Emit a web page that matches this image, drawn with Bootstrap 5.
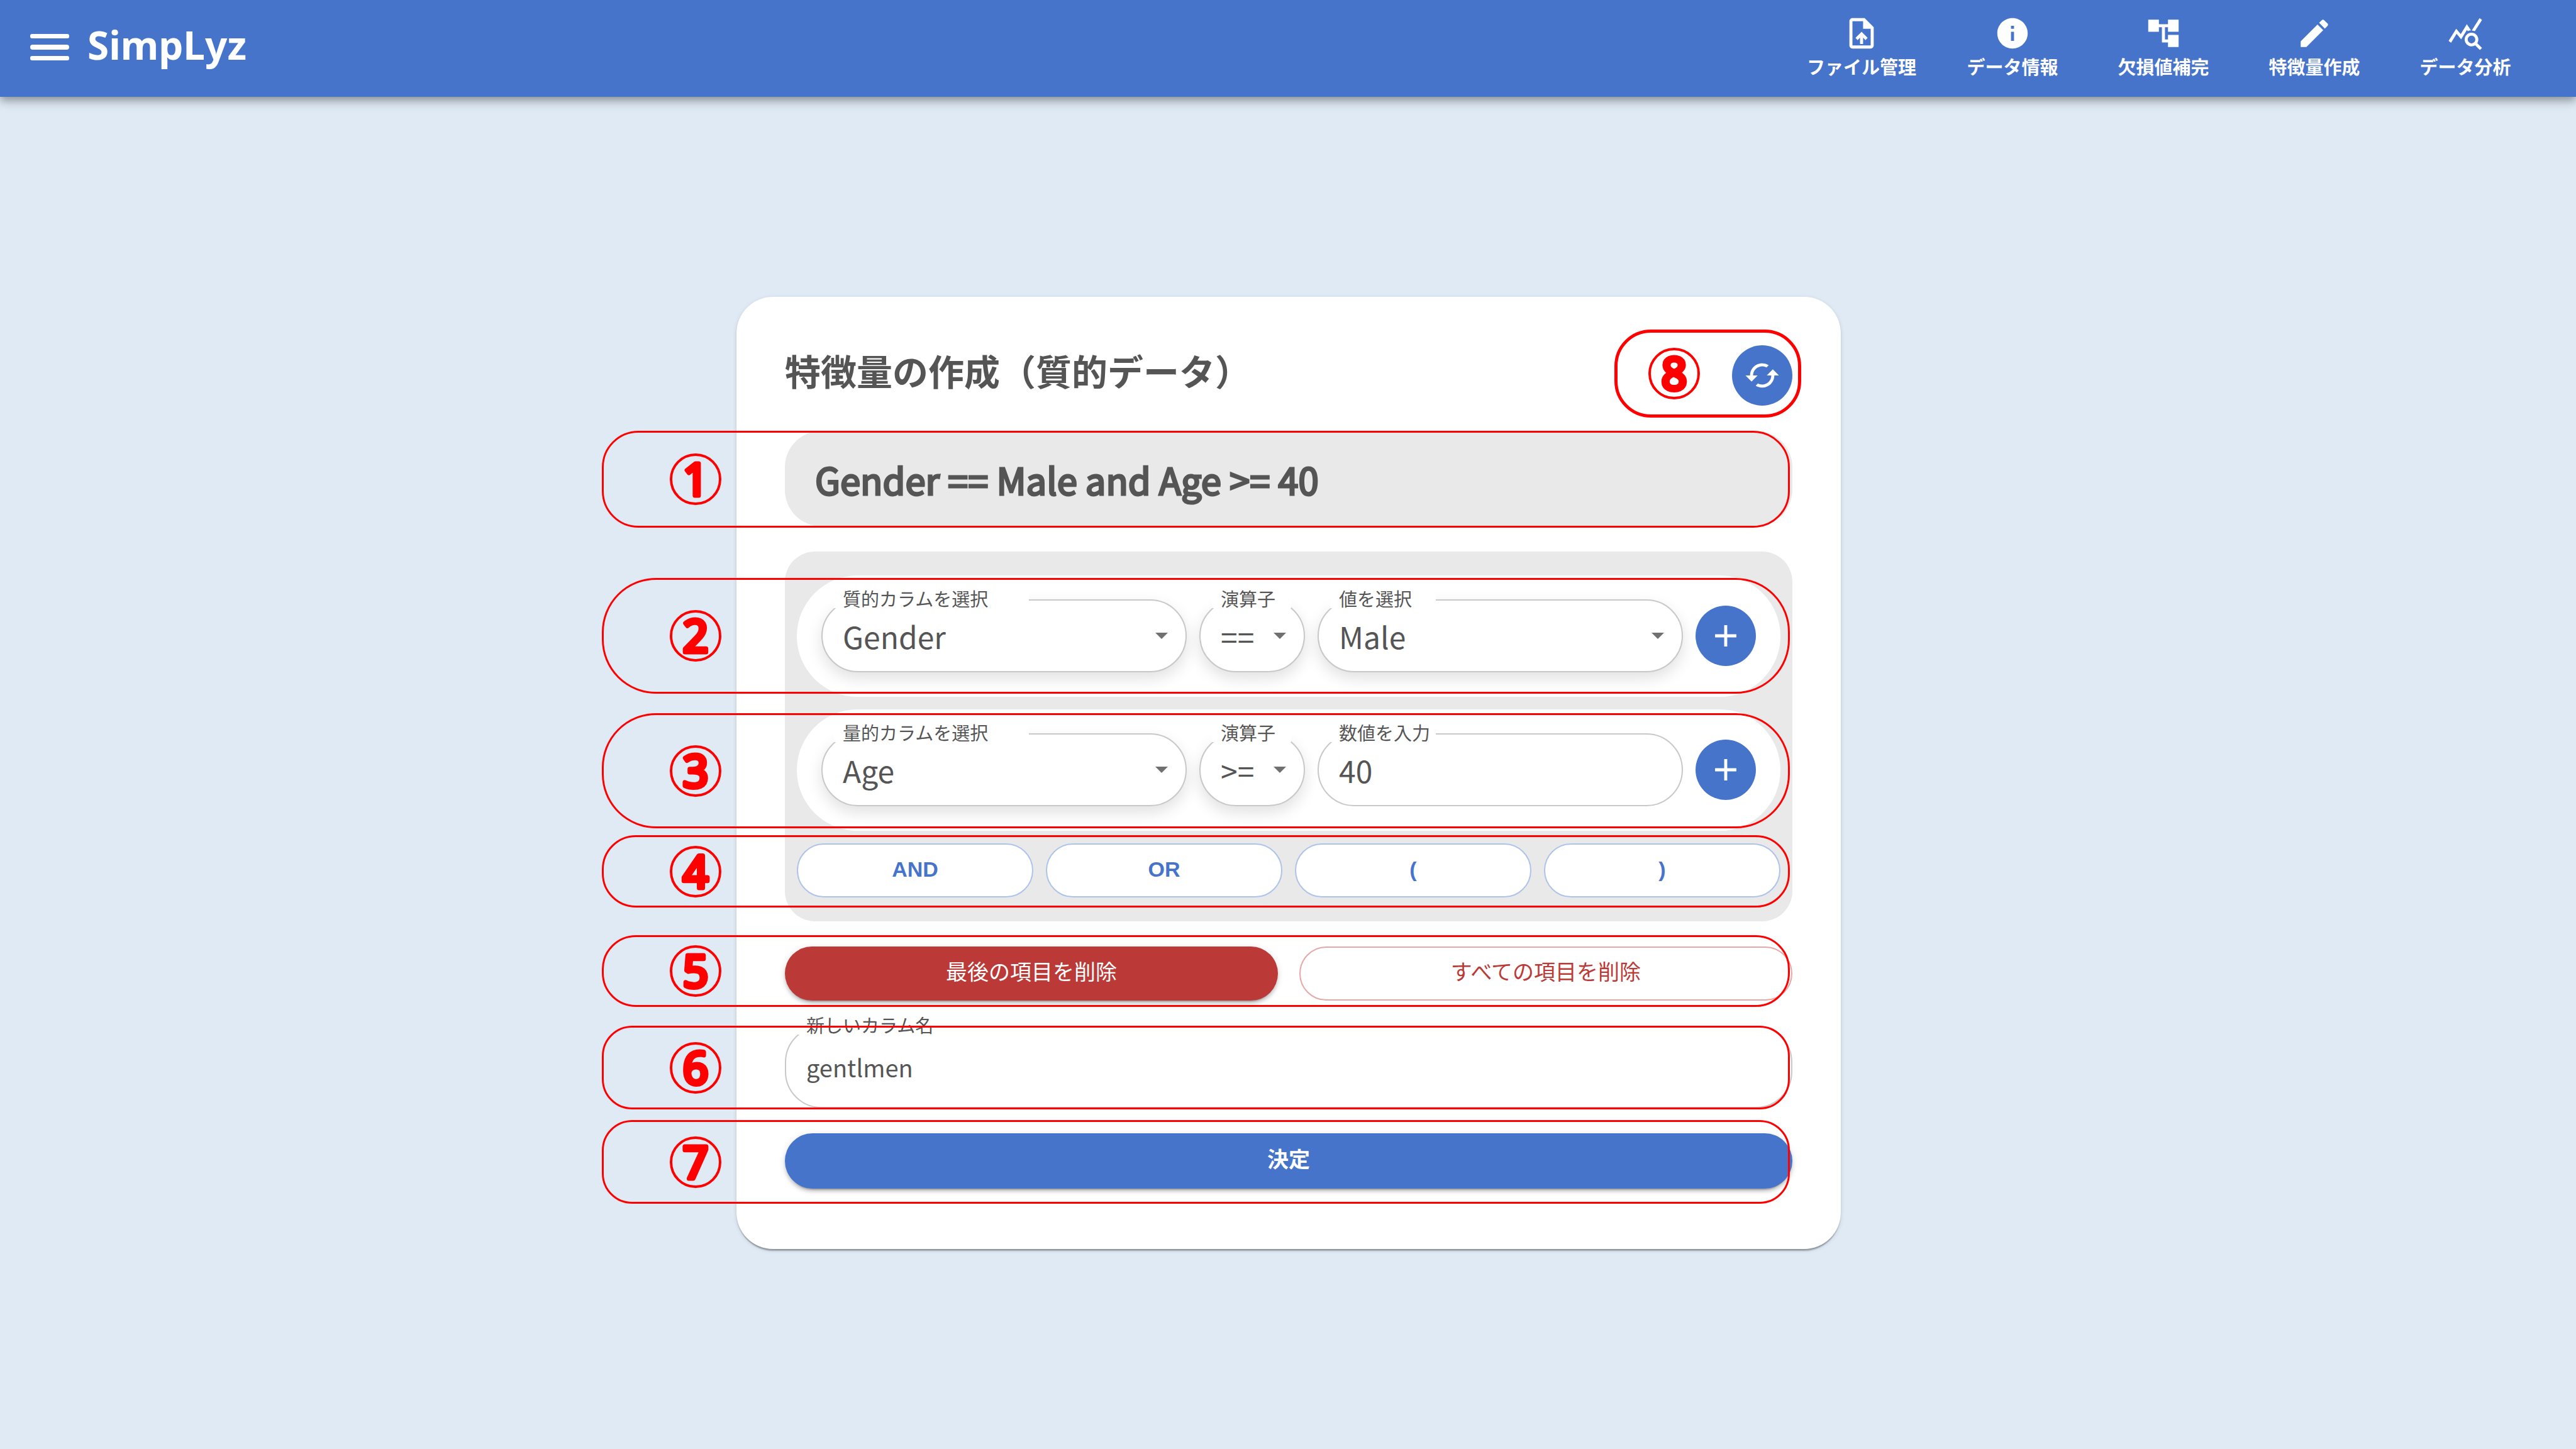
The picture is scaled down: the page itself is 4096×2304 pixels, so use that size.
<!DOCTYPE html>
<html lang="ja">
<head>
<meta charset="utf-8">
<meta name="viewport" content="width=device-width, initial-scale=1">
<title>SimpLyz</title>
<link href="https://cdn.jsdelivr.net/npm/bootstrap@5.3.0/dist/css/bootstrap.min.css" rel="stylesheet">
<style>
:root { --brand: #4674cb; --danger: #bb3a37; --ink: #555; --panel: #e9e9e9; --note: #f00; }
body { background: #e0eaf5; color: var(--ink); font-family: "Noto Sans CJK JP", "Noto Sans", sans-serif; }
svg { fill: currentColor; display: block; }
.icon { width: 58px; height: 58px; }

/* App bar */
.app-bar { background: var(--brand); padding: 24px 56px 29px 48px; z-index: 2;
  box-shadow: 0 5px 10px -2px rgba(0,0,0,.2), 0 10px 12px rgba(0,0,0,.14), 0 2px 24px rgba(0,0,0,.12); }
.menu-btn svg { width: 62px; height: 42px; }
.brand-name { font: 700 62px/84px "Noto Sans", sans-serif; margin-left: 29px; }
.nav-item-link { width: 240px; gap: 3px; font-size: 29px; line-height: 40px; font-weight: 700; }

/* Card */
.page-main { padding-left: 2px; }
.form-panel { max-width: 1756px; padding: 77px 77px 96px; gap: 40px; border-radius: 58px;
  box-shadow: 0 5px 2px -2px rgba(0,0,0,.2), 0 2px 2px rgba(0,0,0,.14), 0 2px 7px rgba(0,0,0,.12); }
.panel-title { font-size: 57px; line-height: 78px; font-weight: 700; }
.formula { background: var(--panel); border-radius: 58px; padding: 33px 48px 31px; line-height: 88px; }
.formula output { font-size: 58px; line-height: 88px; -webkit-text-stroke: 3px var(--ink); }
.builder { background: var(--panel); border-radius: 48px; padding: 38px 19px; gap: 20px; }
.cond { border-radius: 97px; padding: 38px 39px 39px; gap: 20px; }
.op-row { gap: 20px; }
.del-row { gap: 34px; }
.round-btn { width: 96px; height: 96px; padding: 0; color: #fff; background: var(--brand); }

/* Outlined fields */
.field-box { min-width: 0; }
.field-op { flex: 0 0 168px; }
.field-box > label { position: absolute; top: -16px; left: 20px; padding-left: 14px; height: 30px;
  font-size: 29px; line-height: 28px; background: #fff; white-space: nowrap; }
.notch-l { width: 310px; } .notch-m { width: 168px; } .notch-s { width: 126px; } .notch-n { width: 224px; }
.field-box .form-select, .field-box .form-control { border: 2px solid #c8c8c8; border-radius: 58px; color: var(--ink);
  background-color: #fff; font-size: 48px; line-height: 72px; padding: 20px 32px; height: auto; }
.field-box .form-select { padding-right: 56px; box-shadow: 0 10px 24px rgba(0,0,0,.12);
  background-image: url("data:image/svg+xml,%3Csvg xmlns='http://www.w3.org/2000/svg' viewBox='0 0 20 10'%3E%3Cpath fill='%23707070' d='M0 0h20L10 10z'/%3E%3C/svg%3E");
  background-size: 20px 10px; background-position: right 28px center; }
.field-box .name-input { font-size: 38px; line-height: 57px; padding: 35px 32px; }

/* Buttons */
.pill-btn { font-family: "Liberation Sans", "Noto Sans CJK JP", sans-serif; font-size: 34px; line-height: 56px;
  padding: 11px 15px 15px; border: 2px solid transparent; border-radius: 43px; }
.pill-op { color: var(--brand); background: #fff; border-color: #aec3ea; font-weight: 700; }
.pill-raised { color: #fff; box-shadow: 0 7px 2px -5px rgba(0,0,0,.2), 0 5px 5px rgba(0,0,0,.14), 0 2px 12px rgba(0,0,0,.12); }
.pill-danger { background: var(--danger); }
.pill-danger-line { color: var(--danger); border-color: #e5a8a6; }
.pill-submit { background: var(--brand); font-weight: 700; padding: 12px 15px 16px; border-radius: 44px; }

/* Numbered call-outs laid over the form */
.note-box { position: absolute; left: -291px; right: 4px; border: 3px solid var(--note); padding-left: 105px; pointer-events: none; z-index: 3; }
.builder .note-box { left: -310px; right: -15px; }
.note-num { width: 82px; height: 82px; stroke: var(--note); overflow: visible; }
.note-num circle { fill: none; stroke-width: 4px; }
.note-num text { fill: var(--note); font: 400 71px "Noto Sans", sans-serif; text-anchor: middle; stroke-width: 7px; stroke-linejoin: round; stroke-linecap: round; }
.note-1 { top: 0; bottom: -2px; border-radius: 58px; }
.note-2 { top: 4px; bottom: 5px; border-radius: 86px; }
.note-3 { top: 6px; bottom: 4px; border-radius: 86px; }
.note-4 { top: -13px; bottom: -16px; border-radius: 54px; }
.note-5 { top: -18px; bottom: -10px; border-radius: 54px; }
.note-6 { top: 0; bottom: -2px; border-radius: 48px; }
.note-7 { top: -21px; bottom: -24px; border-radius: 48px; }
.note-8 { top: -25px; bottom: -19px; left: -187px; right: -14px; border-width: 5px; border-radius: 58px; padding-left: 49px; }
</style>
</head>
<body class="min-vh-100 d-flex flex-column">
<header class="app-bar d-flex align-items-center justify-content-between text-white position-relative">
  <div class="d-flex align-items-center">
    <button type="button" class="menu-btn btn p-0 border-0 text-white" aria-label="メニュー">
      <svg viewBox="0 0 62 42"><rect width="62" height="7" rx="3"/><rect y="17" width="62" height="8" rx="4"/><rect y="35" width="62" height="7" rx="3"/></svg>
    </button>
    <a href="#" class="brand-name text-white text-decoration-none pb-2">SimpLyz</a>
  </div>
  <nav class="d-flex">
    <a href="#" class="nav-item-link d-flex flex-column align-items-center text-white text-decoration-none">
      <svg class="icon" viewBox="0 0 24 24"><path d="M14 2H6c-1.100 0-1.990.9-1.990 2L4 20c0 1.100.89 2 1.990 2H18c1.100 0 2-.9 2-2V8l-6-6zm4 18H6V4h7v5h5v11zM8 15.010l1.410 1.410L11 14.840V19h2v-4.160l1.590 1.590L16 15.010 12.010 11 8 15.010z"/></svg>
      <span>ファイル管理</span></a>
    <a href="#" class="nav-item-link d-flex flex-column align-items-center text-white text-decoration-none">
      <svg class="icon" viewBox="0 0 24 24"><path d="M12 2C6.480 2 2 6.480 2 12s4.480 10 10 10 10-4.480 10-10S17.520 2 12 2zm1 15h-2v-6h2v6zm0-8h-2V7h2v2z"/></svg>
      <span>データ情報</span></a>
    <a href="#" class="nav-item-link d-flex flex-column align-items-center text-white text-decoration-none">
      <svg class="icon" viewBox="0 0 24 24"><path d="M22 11V3h-7v3H9V3H2v8h7V8h2v10h4v3h7v-8h-7v3h-2V8h2v3z"/></svg>
      <span>欠損値補完</span></a>
    <a href="#" class="nav-item-link d-flex flex-column align-items-center text-white text-decoration-none">
      <svg class="icon" viewBox="0 0 24 24"><path d="M3 17.250V21h3.750L17.810 9.940l-3.750-3.750L3 17.250zM20.710 7.040c.39-.39.39-1.020 0-1.410l-2.340-2.340c-.39-.39-1.020-.39-1.410 0l-1.830 1.830 3.750 3.750 1.830-1.830z"/></svg>
      <span>特徴量作成</span></a>
    <a href="#" class="nav-item-link d-flex flex-column align-items-center text-white text-decoration-none">
      <svg class="icon" viewBox="0 0 24 24"><path d="M19.880 18.470c.44-.7.7-1.510.7-2.390 0-2.490-2.010-4.500-4.500-4.500s-4.500 2.010-4.500 4.500 2.010 4.500 4.490 4.500c.88 0 1.700-.26 2.390-.7L21.580 23 23 21.580l-3.120-3.110zm-3.800.11c-1.380 0-2.500-1.120-2.500-2.500s1.120-2.500 2.500-2.500 2.500 1.120 2.500 2.500-1.120 2.500-2.500 2.500zm-.36-8.500c-.74.02-1.450.18-2.100.45l-.55-.83-3.800 6.180-3.010-3.520-3.630 5.810L1 17l5-8 3 3.500L13 6l2.720 4.080zm2.590.5c-.64-.28-1.330-.45-2.050-.49L21.380 2 23 3.180l-4.690 7.400z"/></svg>
      <span>データ分析</span></a>
  </nav>
</header>

<main class="page-main flex-grow-1 d-flex align-items-center justify-content-center">
  <form class="form-panel w-100 bg-white d-flex flex-column">
    <div class="d-flex justify-content-between align-items-start">
      <h1 class="panel-title m-0">特徴量の作成（質的データ）</h1>
      <div class="position-relative">
        <button type="button" class="btn round-btn rounded-circle d-flex align-items-center justify-content-center" aria-label="更新">
          <svg class="icon" viewBox="0 0 24 24"><path d="m19 8-4 4h3c0 3.310-2.690 6-6 6-1.010 0-1.970-.25-2.800-.7l-1.460 1.460C8.970 19.540 10.430 20 12 20c4.420 0 8-3.580 8-8h3l-4-4zM6 12c0-3.310 2.690-6 6-6 1.010 0 1.970.25 2.800.7l1.460-1.460C15.030 4.460 13.570 4 12 4c-4.420 0-8 3.580-8 8H1l4 4 4-4H6z"/></svg>
        </button>
        <div class="note-box note-8 d-flex align-items-center"><svg class="note-num" viewBox="0 0 82 82"><circle cx="41" cy="41" r="39"/><text x="41" y="67">8</text></svg></div>
      </div>
    </div>

    <div class="formula position-relative"><output class="d-block">Gender == Male and Age &gt;= 40</output>
      <div class="note-box note-1 d-flex align-items-center"><svg class="note-num" viewBox="0 0 82 82"><circle cx="41" cy="41" r="39"/><text x="41" y="67">1</text></svg></div>
    </div>

    <div class="builder d-flex flex-column">
      <div class="cond bg-white d-flex align-items-center position-relative">
        <div class="field-box position-relative flex-fill w-50">
          <select id="qualCol" class="form-select"><option>Gender</option></select>
          <label for="qualCol" class="notch-l">質的カラムを選択</label>
        </div>
        <div class="field-box field-op position-relative">
          <select id="qualOp" class="form-select"><option>==</option></select>
          <label for="qualOp" class="notch-s">演算子</label>
        </div>
        <div class="field-box position-relative flex-fill w-50">
          <select id="qualVal" class="form-select"><option>Male</option></select>
          <label for="qualVal" class="notch-m">値を選択</label>
        </div>
        <button type="button" class="btn round-btn rounded-circle flex-shrink-0 d-flex align-items-center justify-content-center" aria-label="追加">
          <svg class="icon" viewBox="0 0 24 24"><path d="M19 13h-6v6h-2v-6H5v-2h6V5h2v6h6z"/></svg>
        </button>
        <div class="note-box note-2 d-flex align-items-center"><svg class="note-num" viewBox="0 0 82 82"><circle cx="41" cy="41" r="39"/><text x="41" y="67">2</text></svg></div>
      </div>

      <div class="cond bg-white d-flex align-items-center position-relative">
        <div class="field-box position-relative flex-fill w-50">
          <select id="quantCol" class="form-select"><option>Age</option></select>
          <label for="quantCol" class="notch-l">量的カラムを選択</label>
        </div>
        <div class="field-box field-op position-relative">
          <select id="quantOp" class="form-select"><option>&gt;=</option></select>
          <label for="quantOp" class="notch-s">演算子</label>
        </div>
        <div class="field-box position-relative flex-fill w-50">
          <input id="quantVal" type="text" inputmode="numeric" class="form-control" value="40">
          <label for="quantVal" class="notch-m">数値を入力</label>
        </div>
        <button type="button" class="btn round-btn rounded-circle flex-shrink-0 d-flex align-items-center justify-content-center" aria-label="追加">
          <svg class="icon" viewBox="0 0 24 24"><path d="M19 13h-6v6h-2v-6H5v-2h6V5h2v6h6z"/></svg>
        </button>
        <div class="note-box note-3 d-flex align-items-center"><svg class="note-num" viewBox="0 0 82 82"><circle cx="41" cy="41" r="39"/><text x="41" y="67">3</text></svg></div>
      </div>

      <div class="op-row d-flex position-relative">
        <button type="button" class="btn pill-btn pill-op w-25">AND</button>
        <button type="button" class="btn pill-btn pill-op w-25">OR</button>
        <button type="button" class="btn pill-btn pill-op w-25">(</button>
        <button type="button" class="btn pill-btn pill-op w-25">)</button>
        <div class="note-box note-4 d-flex align-items-center"><svg class="note-num" viewBox="0 0 82 82"><circle cx="41" cy="41" r="39"/><text x="41" y="67">4</text></svg></div>
      </div>
    </div>

    <div class="del-row d-flex position-relative">
      <button type="button" class="btn pill-btn pill-raised pill-danger w-50">最後の項目を削除</button>
      <button type="button" class="btn pill-btn pill-danger-line w-50">すべての項目を削除</button>
      <div class="note-box note-5 d-flex align-items-center"><svg class="note-num" viewBox="0 0 82 82"><circle cx="41" cy="41" r="39"/><text x="41" y="67">5</text></svg></div>
    </div>

    <div class="field-box position-relative">
      <input id="newCol" type="text" class="form-control name-input" value="gentlmen">
      <label for="newCol" class="notch-n">新しいカラム名</label>
      <div class="note-box note-6 d-flex align-items-center"><svg class="note-num" viewBox="0 0 82 82"><circle cx="41" cy="41" r="39"/><text x="41" y="67">6</text></svg></div>
    </div>

    <div class="position-relative">
      <button type="submit" class="btn pill-btn pill-raised pill-submit w-100">決定</button>
      <div class="note-box note-7 d-flex align-items-center"><svg class="note-num" viewBox="0 0 82 82"><circle cx="41" cy="41" r="39"/><text x="41" y="67">7</text></svg></div>
    </div>
  </form>
</main>
<script src="https://cdn.jsdelivr.net/npm/bootstrap@5.3.0/dist/js/bootstrap.bundle.min.js"></script>
</body>
</html>
